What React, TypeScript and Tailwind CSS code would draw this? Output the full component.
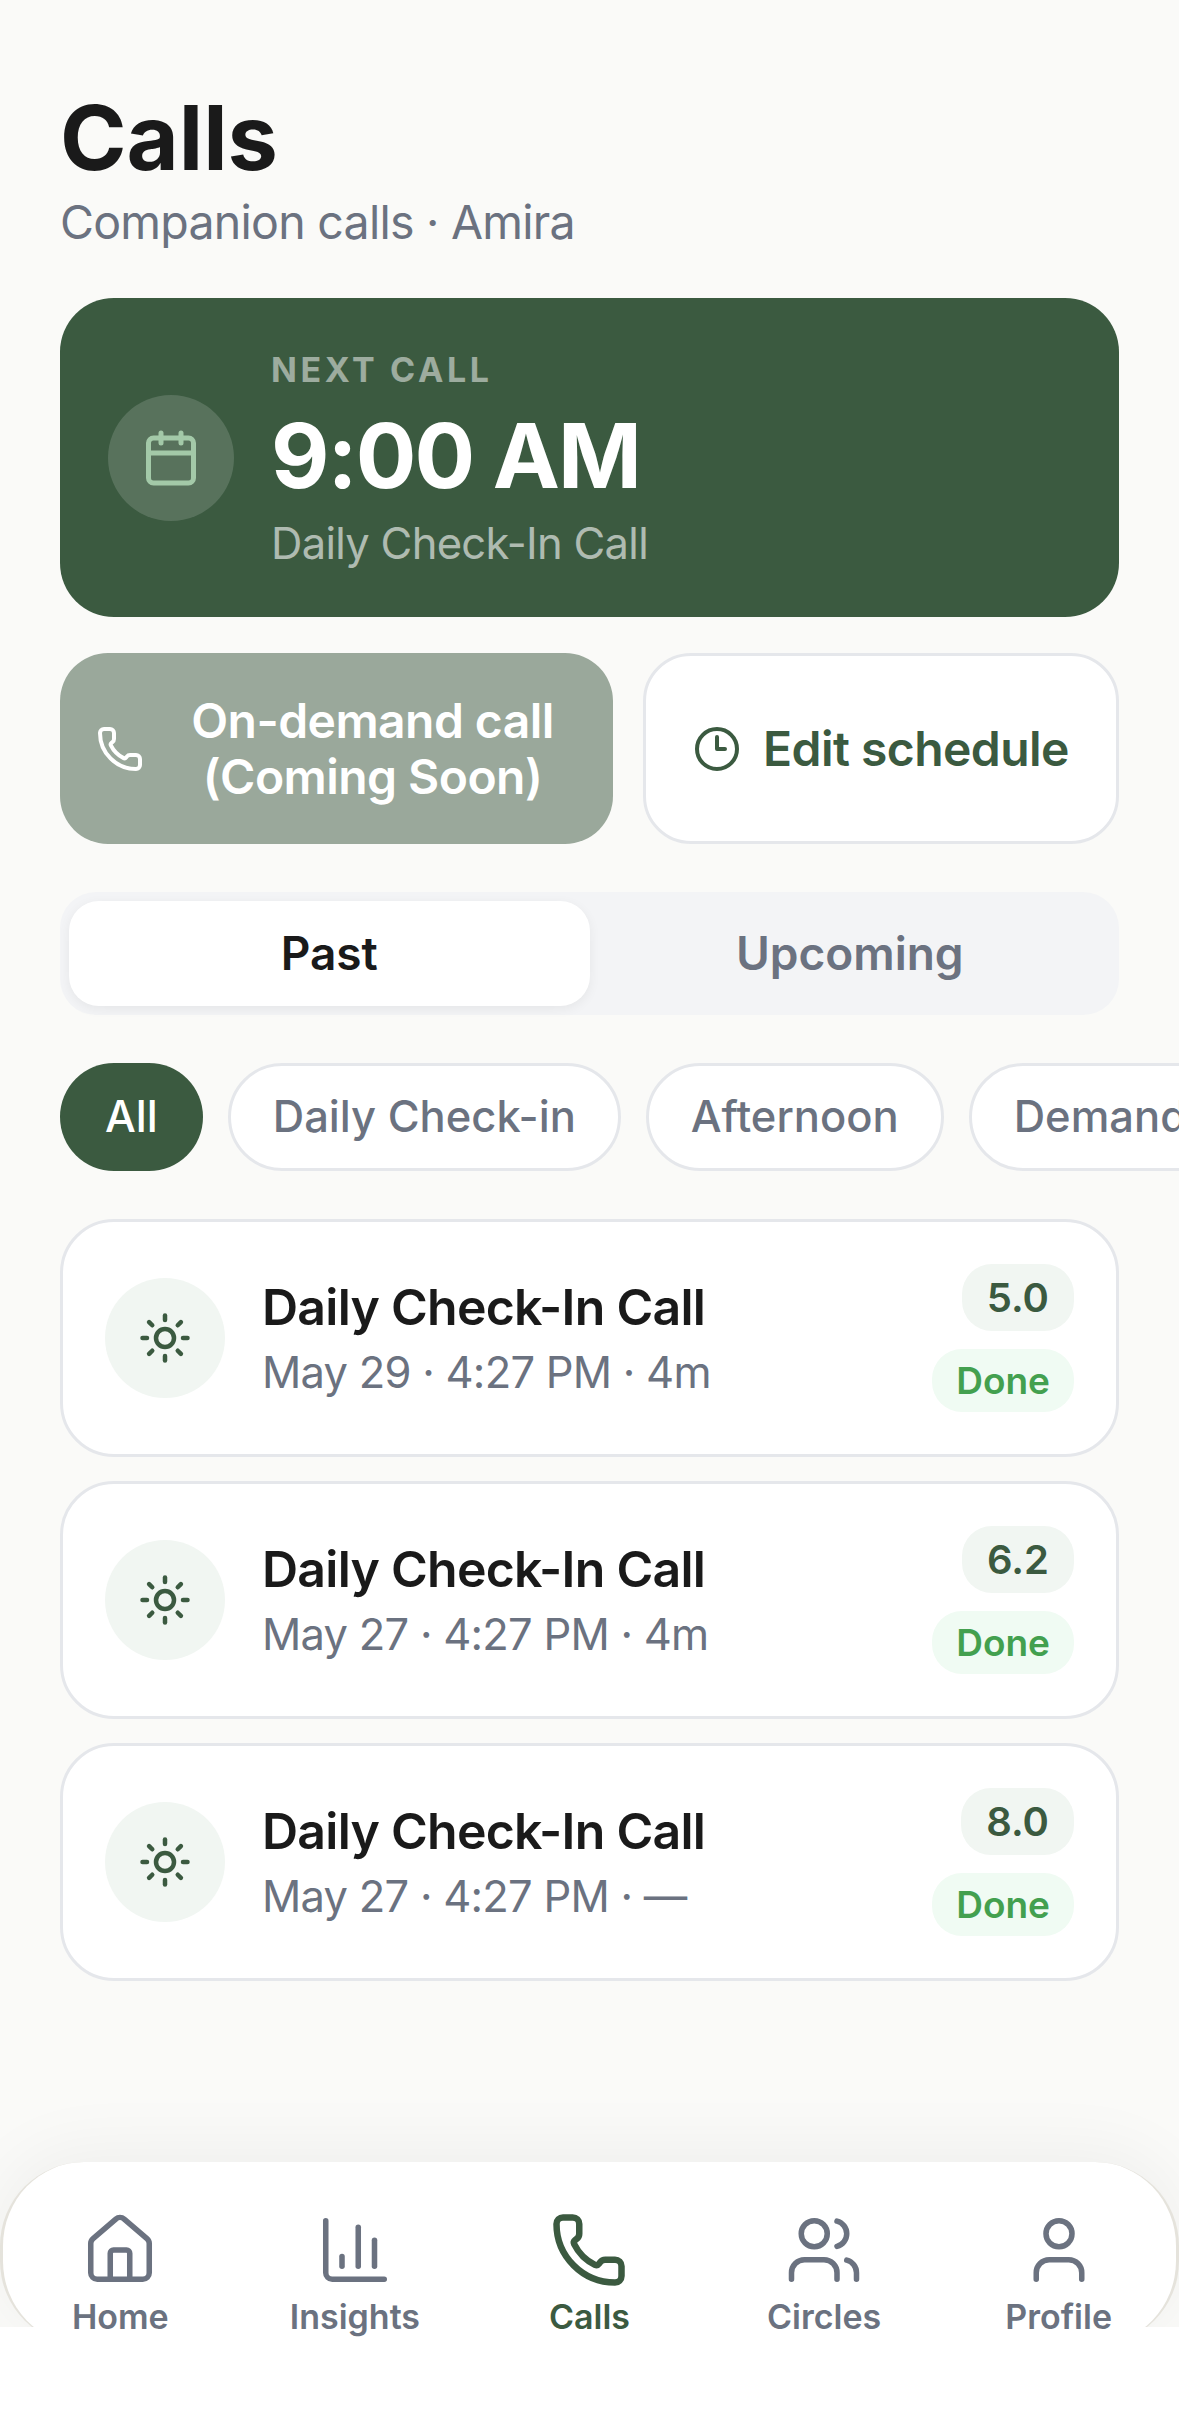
import { Calendar, ChartColumn, Clock3, House, Phone, Sun, User, Users } from "lucide-react";

const filters = ["All", "Daily Check-in", "Afternoon", "Demand"];

const calls = [
  { meta: "May 29 · 4:27 PM · 4m", score: "5.0" },
  { meta: "May 27 · 4:27 PM · 4m", score: "6.2" },
  { meta: "May 27 · 4:27 PM · —", score: "8.0" },
];

const navItems = [
  { label: "Home", Icon: House },
  { label: "Insights", Icon: ChartColumn },
  { label: "Calls", Icon: Phone, active: true },
  { label: "Circles", Icon: Users },
  { label: "Profile", Icon: User },
];

export default function App() {
  return (
    <div className="flex h-[2423px] w-[1179px] flex-col overflow-hidden bg-[#fafaf8] font-['Inter',sans-serif]">
      <main className="flex-1 pt-[84px]">
        {/* Header */}
        <div className="px-[60px]">
          <h1 className="text-[90px] leading-[108px] font-bold text-[#1a1a1a]">Calls</h1>
          <p className="text-[46.5px] leading-[60px] tracking-[-0.75px] text-[#6b7280]">Companion calls · Amira</p>
        </div>

        {/* Next call */}
        <div className="mx-[60px] mt-[46px] flex h-[319px] items-center gap-[37px] rounded-[54px] bg-[#3b5a40] px-[48px]">
          <div className="flex h-[126px] w-[126px] items-center justify-center rounded-full bg-white/15">
            <Calendar size={60} strokeWidth={2} className="text-[#a3c9a8]" />
          </div>
          <div className="pt-[3px]">
            <div className="text-[34px] leading-[42px] font-bold tracking-[3.6px] text-white/50">NEXT CALL</div>
            <div className="mt-[20px] text-[90px] leading-[90px] font-bold tracking-[-1.9px] text-white">9:00 AM</div>
            <div className="mt-[15px] text-[43.5px] leading-[54px] tracking-[-0.7px] text-white/60">Daily Check-In Call</div>
          </div>
        </div>

        {/* Actions */}
        <div className="mx-[60px] mt-[36px] flex h-[191px] gap-[30px]">
          <button className="flex w-[553px] items-center gap-[24px] rounded-[48px] bg-[#9aa89b] px-[36px] text-white">
            <Phone size={48} strokeWidth={2} className="shrink-0" />
            <span className="flex-1 text-center text-[48px] leading-[56px] font-semibold tracking-[-0.55px]">
              On-demand call
              <br />
              (Coming Soon)
            </span>
          </button>
          <button className="flex flex-1 items-center justify-center gap-[22px] rounded-[48px] border-[3px] border-[#e5e7eb] bg-white text-[#3b5a40]">
            <Clock3 size={48} strokeWidth={2} />
            <span className="text-[48px] font-semibold tracking-[-0.55px]">Edit schedule</span>
          </button>
        </div>

        {/* Tabs */}
        <div className="mx-[60px] mt-[48px] flex h-[123px] rounded-[36px] bg-[#f3f4f6] p-[9px]">
          <div className="flex flex-1 items-center justify-center rounded-[30px] bg-white text-[46px] font-semibold text-[#1a1a1a] shadow-[0_3px_12px_rgba(0,0,0,0.06)]">
            Past
          </div>
          <div className="flex flex-1 items-center justify-center text-[46px] font-semibold text-[#6b7280]">Upcoming</div>
        </div>

        {/* Filters */}
        <div className="mt-[48px] flex gap-[25px] overflow-hidden pl-[60px]">
          {filters.map((f, i) =>
            i === 0 ? (
              <div key={f} className="flex h-[108px] shrink-0 items-center rounded-full bg-[#3b5a40] px-[45px] text-[43.5px] font-medium text-white">
                {f}
              </div>
            ) : (
              <div
                key={f}
                className="flex h-[108px] shrink-0 items-center rounded-full border-[3px] border-[#e5e7eb] bg-white px-[42px] text-[43.5px] font-medium text-[#6b7280]"
              >
                {f}
              </div>
            ),
          )}
        </div>

        {/* Call list */}
        <div className="mx-[60px] mt-[48px] flex flex-col gap-[24px]">
          {calls.map((c, i) => (
            <div key={i} className="flex h-[238px] items-center rounded-[54px] border-[3px] border-[#e5e7eb] bg-white px-[42px]">
              <div className="flex h-[120px] w-[120px] shrink-0 items-center justify-center rounded-full bg-[#f1f6f2]">
                <Sun size={54} strokeWidth={2} className="text-[#3b5a40]" />
              </div>
              <div className="ml-[37px] flex-1">
                <div className="text-[50px] leading-[60px] font-semibold tracking-[-0.75px] text-[#1a1a1a]">Daily Check-In Call</div>
                <div className="mt-[8px] text-[43.5px] leading-[54px] tracking-[-0.75px] text-[#6b7280]">{c.meta}</div>
              </div>
              <div className="flex flex-col items-end gap-[18px]">
                <div className="flex h-[67px] items-center rounded-[30px] bg-[#f1f6f2] px-[25px] text-[40px] font-semibold text-[#3b5a40]">
                  {c.score}
                </div>
                <div className="flex h-[63px] items-center rounded-[30px] bg-[#f0fbf3] px-[24px] text-[37px] font-semibold text-[#43a04f]">
                  Done
                </div>
              </div>
            </div>
          ))}
        </div>
      </main>

      {/* Bottom nav */}
      <nav className="-mb-[18px] flex h-[183px] items-start rounded-[84px] border-x-[3px] border-[#e5e3dc] bg-white pt-[49px] shadow-[0_-10px_70px_rgba(0,0,0,0.05)]">
        {navItems.map(({ label, Icon, active }) => (
          <div key={label} className={`flex flex-1 flex-col items-center ${active ? "text-[#3b5a40]" : "text-[#6b7280]"}`}>
            <Icon size={78} strokeWidth={active ? 2 : 1.7} />
            <span className="relative z-20 mt-[8px] text-[34px] leading-[40px] font-semibold">{label}</span>
          </div>
        ))}
      </nav>
      <div className="relative h-[96px] shrink-0 bg-white" />
    </div>
  );
}
